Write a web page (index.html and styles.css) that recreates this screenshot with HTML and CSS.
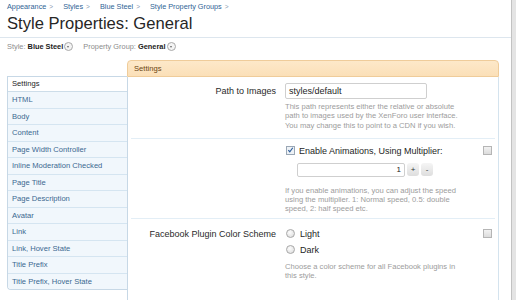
FILE: index.html
```html
<!DOCTYPE html>
<html lang="en">
<head>
  <meta charset="UTF-8" />
  <title>Style Properties: General</title>
  <link rel="stylesheet" href="styles.css">
</head>
<body>
  <div class="page">
    <div class="content">
      <div class="breadcrumb">
        <a>Appearance</a><span class="sep">&gt;</span>
        <a>Styles</a><span class="sep">&gt;</span>
        <a>Blue Steel</a><span class="sep">&gt;</span>
        <a>Style Property Groups</a><span class="sep">&gt;</span>
      </div>
      <h1 class="title">Style Properties: General</h1>

      <div class="chooser">
        <span class="chooser-label">Style:</span> <b>Blue Steel</b><span class="drop"></span>
        <span class="chooser-label group">Property Group:</span> <b>General</b><span class="drop"></span>
      </div>

      <div class="workspace">
        <div class="side">
          <ul class="side-nav">
            <li class="side-head">Settings</li>
            <li>HTML</li>
            <li>Body</li>
            <li>Content</li>
            <li>Page Width Controller</li>
            <li>Inline Moderation Checked</li>
            <li>Page Title</li>
            <li>Page Description</li>
            <li>Avatar</li>
            <li>Link</li>
            <li>Link, Hover State</li>
            <li>Title Prefix</li>
            <li>Title Prefix, Hover State</li>
          </ul>
        </div>

        <div class="main">
          <div class="main-head">Settings</div>
          <div class="main-body">

            <div class="row row-path">
              <label class="row-label">Path to Images</label>
              <div class="row-ctrl">
                <div class="text-input">styles/default</div>
                <p class="explain">This path represents either the relative or absolute path to images used by the XenForo user interface. You may change this to point to a CDN if you wish.</p>
              </div>
              <span class="revert"></span>
            </div>

            <div class="row row-anim">
              <span class="row-label"></span>
              <div class="row-ctrl">
                <div class="check-line">
                  <span class="check checked">
                    <svg width="8" height="8" viewBox="0 0 8 8"><path d="M1.5 4.2 L3.2 6 L6.6 1.4" fill="none" stroke="#2d5e9c" stroke-width="1.3"/></svg>
                  </span>
                  <span class="check-text">Enable Animations, Using Multiplier:</span>
                </div>
                <div class="spin">
                  <div class="spin-input">1</div>
                  <span class="spin-btn">+</span>
                  <span class="spin-btn">-</span>
                </div>
                <p class="explain">If you enable animations, you can adjust the speed using the multiplier. 1: Normal speed, 0.5: double speed, 2: half speed etc.</p>
              </div>
              <span class="revert"></span>
            </div>

            <div class="row row-fb">
              <label class="row-label">Facebook Plugin Color Scheme</label>
              <div class="row-ctrl">
                <div class="radio-line"><span class="radio"></span>Light</div>
                <div class="radio-line"><span class="radio"></span>Dark</div>
                <p class="explain">Choose a color scheme for all Facebook plugins in this style.</p>
              </div>
              <span class="revert"></span>
            </div>

          </div>
        </div>
      </div>
    </div>
    <div class="edge"></div>
  </div>
</body>
</html>
```

FILE: styles.css
```css
body {
  margin: 0;
  font-family: "Liberation Sans", Arial, sans-serif;
  color: #222;
  background: #fff;
}

.page {
  display: flex;
  height: 300px;
  overflow: hidden;
}

.content {
  width: 511px;
}

.edge {
  flex: 1;
  background: #e4e4e4;
  border-left: 1px solid #c2c2c2;
}

/* header */

.breadcrumb {
  padding: 2px 0 0 7px;
  font-size: 7.3px;
  line-height: 9px;
  color: #2f6596;
}

.breadcrumb .sep {
  color: #8a9bb0;
  margin: 0 8px 0 3px;
  font-size: 6.5px;
}

.title {
  margin: 3px 0 0;
  padding: 0 0 3px 7px;
  font-size: 16.6px;
  line-height: 20px;
  font-weight: normal;
  color: #262626;
  border-bottom: 1px solid #dde6ee;
}

.chooser {
  margin-top: 4px;
  padding-left: 7px;
  font-size: 7.4px;
  line-height: 10px;
}

.chooser-label {
  color: #8c8c8c;
}

.chooser-label.group {
  margin-left: 8px;
}

.chooser b {
  font-weight: bold;
  color: #1c1c1c;
}

.drop {
  display: inline-block;
  width: 7px;
  height: 7px;
  margin-left: 1px;
  border: 1px solid #a9a9a9;
  border-radius: 50%;
  vertical-align: -2px;
  background: #f4f4f4;
  position: relative;
}

.drop::after {
  content: "";
  position: absolute;
  left: 2px;
  top: 3px;
  border-left: 1.5px solid transparent;
  border-right: 1.5px solid transparent;
  border-top: 2px solid #666;
}

/* workspace */

.workspace {
  display: flex;
  margin-top: 8px;
  padding-left: 7px;
}

.side {
  width: 120px;
  padding-top: 16px;
}

.side-nav {
  list-style: none;
  margin: 0;
  padding: 0;
  border: 1px solid #c7d8e6;
  border-right: none;
  border-radius: 0 0 0 4px;
  font-size: 7.6px;
  overflow: hidden;
}

.side-nav li {
  height: 15.5px;
  line-height: 15.5px;
  padding-left: 4px;
  background: #f1f7fc;
  color: #3b6890;
  border-bottom: 1px solid #d5e5f1;
  white-space: nowrap;
}

.side-nav li:last-child {
  border-bottom: none;
}

.side-nav .side-head {
  height: 14px;
  line-height: 14px;
  background: #fff;
  color: #1e1e1e;
  border-bottom: 1px solid #cddde9;
}

.main {
  width: 372px;
}

.main-head {
  height: 15px;
  line-height: 15px;
  padding-left: 6px;
  font-size: 7.6px;
  color: #6b4513;
  background: linear-gradient(#fde8c9, #fbe0b8);
  border: 1px solid #efcc9a;
  border-radius: 4px 4px 0 0;
}

.main-body {
  height: 240px;
  border-left: 1px solid #c7d8e6;
  border-right: 1px solid #d4e3ee;
}

.row {
  display: grid;
  grid-template-columns: 145px 180px 1fr;
  column-gap: 9px;
  margin: 0 3px;
  border-bottom: 1px solid #e3eef6;
}

.row-label {
  text-align: right;
  font-size: 9px;
  line-height: 16px;
  color: #2a2a2a;
}

.row-ctrl {
  font-size: 9px;
}

.revert {
  justify-self: end;
  width: 7px;
  height: 7px;
  margin-right: 3px;
  border: 1px solid #b5b5b5;
  background: linear-gradient(#f2f2f2, #dcdcdc);
}

.explain {
  margin: 0;
  font-size: 7.6px;
  line-height: 9.3px;
  color: #9c9c9c;
}

/* row: path */

.row-path {
  padding: 6px 0 8px;
}

.row-path .revert {
  visibility: hidden;
}

.text-input {
  width: 137px;
  height: 14px;
  line-height: 14px;
  padding-left: 3px;
  border: 1px solid #cfcfcf;
  border-radius: 2px;
  color: #1e1e1e;
}

.row-path .explain {
  margin-top: 3px;
}

/* row: animations */

.row-anim {
  padding: 6px 0 4px;
}

.row-anim .revert {
  margin-top: 1px;
}

.check-line {
  display: flex;
  align-items: center;
  height: 12px;
}

.check {
  width: 7px;
  height: 7px;
  border: 1px solid #9aa7b5;
  background: #eef2f6;
  margin: 0 4px 0 1px;
  display: flex;
}

.check svg {
  margin: -1px 0 0 0;
}

.check-text {
  font-size: 9px;
  color: #1e1e1e;
}

.spin {
  display: flex;
  gap: 2px;
  margin: 6px 0 0 12px;
  height: 14px;
}

.spin-input {
  width: 103px;
  height: 12px;
  line-height: 12px;
  padding-right: 3px;
  text-align: right;
  border: 1px solid #cfcfcf;
  border-radius: 2px;
  font-size: 8px;
}

.spin-btn {
  width: 12px;
  height: 13px;
  line-height: 13px;
  text-align: center;
  font-size: 8px;
  color: #333;
  background: linear-gradient(#f5f5f5, #dedede);
  border-radius: 3px;
}

.row-anim .explain {
  margin-top: 9px;
}

/* row: facebook */

.row-fb {
  padding: 7px 0 0;
  border-bottom: none;
}

.row-fb .revert {
  margin-top: 3px;
}

.radio-line {
  display: flex;
  align-items: center;
  height: 16px;
  font-size: 9px;
  color: #1e1e1e;
}

.radio {
  width: 7px;
  height: 7px;
  margin: 0 5px 0 1px;
  border: 1px solid #a8a8a8;
  border-radius: 50%;
  background: radial-gradient(circle at 40% 35%, #fdfdfd, #d9d9d9);
}

.row-fb .explain {
  margin-top: 4px;
}
```
